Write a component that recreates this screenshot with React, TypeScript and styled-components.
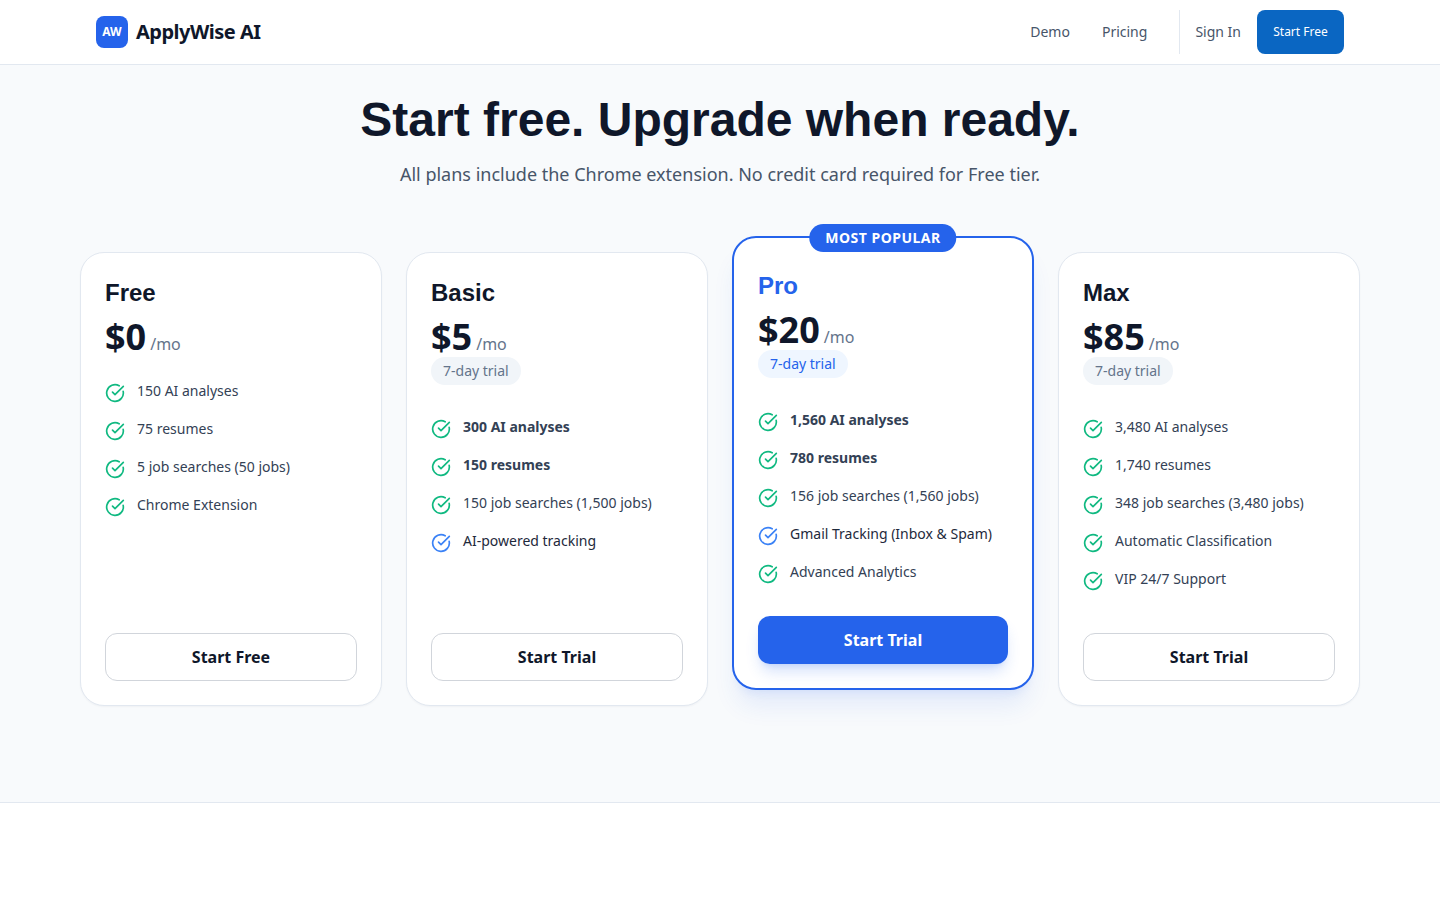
import styled, { createGlobalStyle } from 'styled-components';
import { CircleCheckBig } from 'lucide-react';

const GlobalStyle = createGlobalStyle`
  * {
    box-sizing: border-box;
  }
  body {
    margin: 0;
    background: #fff;
    font-family: "Noto Sans", sans-serif;
    color: #0f172a;
  }
`;

const Header = styled.header`
  height: 65px;
  background: #fff;
  border-bottom: 1px solid #e2e8f0;
`;

const HeaderInner = styled.div`
  max-width: 1280px;
  height: 64px;
  margin: 0 auto;
  padding: 0 16px;
  display: flex;
  align-items: center;
  justify-content: space-between;
`;

const Brand = styled.div`
  display: flex;
  align-items: center;
  gap: 8px;
`;

const LogoMark = styled.div`
  width: 32px;
  height: 32px;
  border-radius: 8px;
  background: #2563eb;
  color: #fff;
  font-size: 12px;
  font-weight: 700;
  padding-bottom: 2px;
  display: flex;
  align-items: center;
  justify-content: center;
`;

const BrandName = styled.span`
  font-size: 20px;
  line-height: 28px;
  font-weight: 700;
  letter-spacing: -0.5px;
  color: #0f172a;
`;

const Nav = styled.nav`
  display: flex;
  align-items: center;
`;

const NavLink = styled.a`
  font-size: 14px;
  line-height: 20px;
  color: #475569;
  margin-right: 32px;
`;

const Divider = styled.div`
  width: 1px;
  height: 44px;
  background: #e2e8f0;
  margin-right: 15px;
`;

const SignIn = styled.a`
  font-size: 14px;
  line-height: 20px;
  color: #475569;
  margin-right: 16px;
`;

const HeaderButton = styled.button`
  width: 87px;
  height: 44px;
  border: 0;
  border-radius: 8px;
  background: #0a66c2;
  color: #fff;
  font-family: inherit;
  font-size: 12px;
  padding: 0 0 2px;
`;

const Main = styled.main`
  background: #f8fafc;
  border-bottom: 1px solid #e2e8f0;
  padding: 26px 0 96px;
`;

const Hero = styled.div`
  text-align: center;
  margin-bottom: 64px;
`;

const Title = styled.h1`
  margin: 0 0 11px;
  font-family: "Liberation Sans", Arial, sans-serif;
  font-size: 48px;
  line-height: 58px;
  font-weight: 700;
  color: #0f172a;
`;

const Subtitle = styled.p`
  margin: 0;
  font-size: 18px;
  line-height: 28px;
  color: #475569;
`;

const Grid = styled.div`
  max-width: 1280px;
  margin: 0 auto;
  display: grid;
  grid-template-columns: repeat(4, 1fr);
  gap: 24px;
`;

const Card = styled.div<{ $popular?: boolean }>`
  position: relative;
  display: flex;
  flex-direction: column;
  background: #fff;
  border-radius: 24px;
  border: ${(p) => (p.$popular ? '2px solid #2563eb' : '1px solid #e2e8f0')};
  padding: ${(p) => (p.$popular ? '32px 24px 24px' : '24px')};
  box-shadow: ${(p) =>
    p.$popular
      ? '0 20px 25px -5px rgba(37, 99, 235, 0.1), 0 8px 10px -6px rgba(37, 99, 235, 0.1)'
      : '0 1px 2px rgba(15, 23, 42, 0.04)'};
  transform: ${(p) => (p.$popular ? 'translateY(-16px)' : 'none')};
`;

const Badge = styled.div`
  position: absolute;
  top: -14px;
  left: 50%;
  transform: translateX(-50%);
  height: 28px;
  padding: 0 16px;
  border-radius: 999px;
  background: #2563eb;
  color: #fff;
  font-size: 14px;
  font-weight: 700;
  line-height: 28px;
  letter-spacing: 0.5px;
  white-space: nowrap;
`;

const PlanName = styled.h3<{ $popular?: boolean }>`
  margin: 0 0 8px;
  font-family: "Liberation Sans", Arial, sans-serif;
  font-size: 24px;
  line-height: 32px;
  font-weight: 700;
  color: ${(p) => (p.$popular ? '#2563eb' : '#0f172a')};
`;

const PriceRow = styled.div`
  display: flex;
  align-items: baseline;
  gap: 4px;
  height: 40px;
`;

const Price = styled.span`
  font-size: 36px;
  line-height: 40px;
  font-weight: 700;
  color: #0f172a;
`;

const Period = styled.span`
  font-size: 16px;
  line-height: 24px;
  color: #64748b;
`;

const Trial = styled.span<{ $popular?: boolean }>`
  align-self: flex-start;
  height: 28px;
  padding: 0 12px;
  border-radius: 999px;
  font-size: 14px;
  line-height: 28px;
  background: ${(p) => (p.$popular ? '#eff6ff' : '#f1f5f9')};
  color: ${(p) => (p.$popular ? '#2563eb' : '#64748b')};
  margin-bottom: 8px;
`;

const Features = styled.ul`
  list-style: none;
  margin: 24px 0 32px;
  padding: 0;
  display: flex;
  flex-direction: column;
  gap: 16px;
`;

const Feature = styled.li`
  display: flex;
  align-items: flex-start;
  gap: 12px;
`;

const FeatureIcon = styled(CircleCheckBig)<{ $accent?: boolean }>`
  flex-shrink: 0;
  margin-top: 2px;
  color: ${(p) => (p.$accent ? '#3b82f6' : '#10b981')};
`;

const FeatureText = styled.span<{ $bold?: boolean; $accent?: boolean }>`
  font-size: 14px;
  line-height: 20px;
  font-weight: ${(p) => (p.$bold ? 700 : 400)};
  color: ${(p) => (p.$accent ? '#1e293b' : '#334155')};
`;

const CardButton = styled.button<{ $popular?: boolean }>`
  margin-top: auto;
  width: 100%;
  height: 48px;
  border-radius: 12px;
  font-family: inherit;
  font-size: 16px;
  font-weight: 700;
  border: ${(p) => (p.$popular ? '0' : '1px solid #d1d5db')};
  background: ${(p) => (p.$popular ? '#2563eb' : '#fff')};
  color: ${(p) => (p.$popular ? '#fff' : '#0f172a')};
  box-shadow: ${(p) =>
    p.$popular
      ? '0 10px 15px -3px rgba(37, 99, 235, 0.2), 0 4px 6px -4px rgba(37, 99, 235, 0.2)'
      : 'none'};
`;

const Footer = styled.footer`
  height: 97px;
  background: #fff;
`;

interface PlanFeature {
  label: string;
  bold?: boolean;
  accent?: boolean;
}

interface Plan {
  name: string;
  price: string;
  trial?: boolean;
  popular?: boolean;
  cta: string;
  features: PlanFeature[];
}

const plans: Plan[] = [
  {
    name: 'Free',
    price: '$0',
    cta: 'Start Free',
    features: [
      { label: '150 AI analyses' },
      { label: '75 resumes' },
      { label: '5 job searches (50 jobs)' },
      { label: 'Chrome Extension' },
    ],
  },
  {
    name: 'Basic',
    price: '$5',
    trial: true,
    cta: 'Start Trial',
    features: [
      { label: '300 AI analyses', bold: true },
      { label: '150 resumes', bold: true },
      { label: '150 job searches (1,500 jobs)' },
      { label: 'AI-powered tracking', accent: true },
    ],
  },
  {
    name: 'Pro',
    price: '$20',
    trial: true,
    popular: true,
    cta: 'Start Trial',
    features: [
      { label: '1,560 AI analyses', bold: true },
      { label: '780 resumes', bold: true },
      { label: '156 job searches (1,560 jobs)' },
      { label: 'Gmail Tracking (Inbox & Spam)', accent: true },
      { label: 'Advanced Analytics' },
    ],
  },
  {
    name: 'Max',
    price: '$85',
    trial: true,
    cta: 'Start Trial',
    features: [
      { label: '3,480 AI analyses' },
      { label: '1,740 resumes' },
      { label: '348 job searches (3,480 jobs)' },
      { label: 'Automatic Classification' },
      { label: 'VIP 24/7 Support' },
    ],
  },
];

export default function App() {
  return (
    <>
      <GlobalStyle />
      <Header>
        <HeaderInner>
          <Brand>
            <LogoMark>AW</LogoMark>
            <BrandName>ApplyWise AI</BrandName>
          </Brand>
          <Nav>
            <NavLink>Demo</NavLink>
            <NavLink>Pricing</NavLink>
            <Divider />
            <SignIn>Sign In</SignIn>
            <HeaderButton>Start Free</HeaderButton>
          </Nav>
        </HeaderInner>
      </Header>
      <Main>
        <Hero>
          <Title>Start free. Upgrade when ready.</Title>
          <Subtitle>All plans include the Chrome extension. No credit card required for Free tier.</Subtitle>
        </Hero>
        <Grid>
          {plans.map((plan) => (
            <Card key={plan.name} $popular={plan.popular}>
              {plan.popular && <Badge>MOST POPULAR</Badge>}
              <PlanName $popular={plan.popular}>{plan.name}</PlanName>
              <PriceRow>
                <Price>{plan.price}</Price>
                <Period>/mo</Period>
              </PriceRow>
              {plan.trial && <Trial $popular={plan.popular}>7-day trial</Trial>}
              <Features>
                {plan.features.map((feature) => (
                  <Feature key={feature.label}>
                    <FeatureIcon size={20} $accent={feature.accent} />
                    <FeatureText $bold={feature.bold} $accent={feature.accent}>
                      {feature.label}
                    </FeatureText>
                  </Feature>
                ))}
              </Features>
              <CardButton $popular={plan.popular}>{plan.cta}</CardButton>
            </Card>
          ))}
        </Grid>
      </Main>
      <Footer />
    </>
  );
}
